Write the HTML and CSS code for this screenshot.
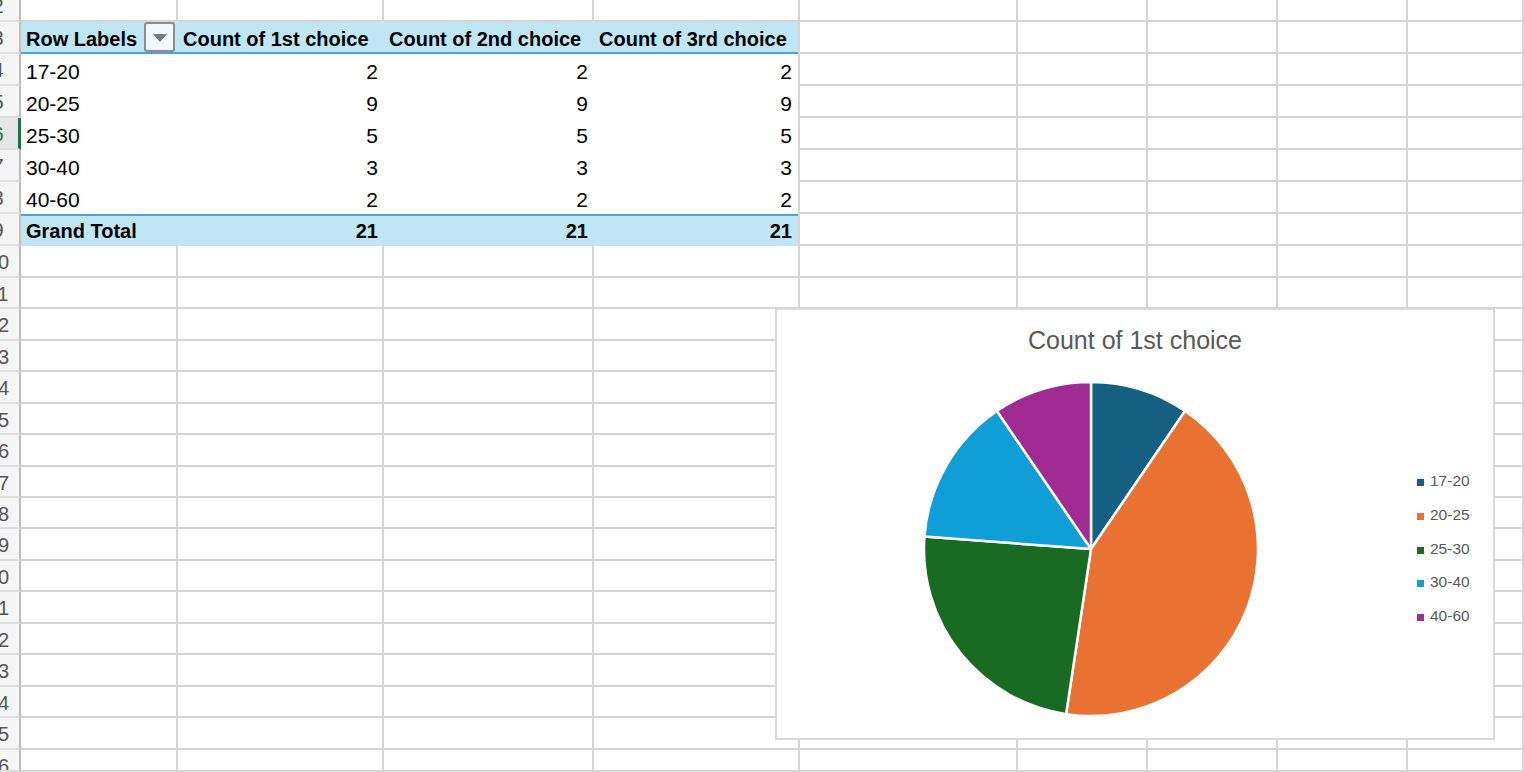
FILE: index.html
```html
<!DOCTYPE html>
<html lang="en">
<head>
    <meta charset="UTF-8">
    <meta name="viewport" content="width=device-width, initial-scale=1.0">
    <title>Age Groups - Pivot</title>
    <link rel="stylesheet" href="styles.css">
</head>
<body>
    <!-- Worksheet grid (rows 2-26, columns A-I) -->
    <div class="sheet" id="sheet">
        <!-- Pivot table on A3:D9 -->
        <div class="pivot">
            <div class="pv-row pv-head">
                <div class="pv-cell label">
                    <span>Row Labels</span>
                    <span class="filter-btn"><span class="arrow"></span></span>
                </div>
                <div class="pv-cell">Count of 1st choice</div>
                <div class="pv-cell">Count of 2nd choice</div>
                <div class="pv-cell">Count of 3rd choice</div>
            </div>
            <div class="pv-row">
                <div class="pv-cell">17-20</div>
                <div class="pv-cell num">2</div>
                <div class="pv-cell num">2</div>
                <div class="pv-cell num">2</div>
            </div>
            <div class="pv-row">
                <div class="pv-cell">20-25</div>
                <div class="pv-cell num">9</div>
                <div class="pv-cell num">9</div>
                <div class="pv-cell num">9</div>
            </div>
            <div class="pv-row">
                <div class="pv-cell">25-30</div>
                <div class="pv-cell num">5</div>
                <div class="pv-cell num">5</div>
                <div class="pv-cell num">5</div>
            </div>
            <div class="pv-row">
                <div class="pv-cell">30-40</div>
                <div class="pv-cell num">3</div>
                <div class="pv-cell num">3</div>
                <div class="pv-cell num">3</div>
            </div>
            <div class="pv-row">
                <div class="pv-cell">40-60</div>
                <div class="pv-cell num">2</div>
                <div class="pv-cell num">2</div>
                <div class="pv-cell num">2</div>
            </div>
            <div class="pv-row pv-total">
                <div class="pv-cell">Grand Total</div>
                <div class="pv-cell num">21</div>
                <div class="pv-cell num">21</div>
                <div class="pv-cell num">21</div>
            </div>
        </div>
    </div>

    <!-- Pie chart floating over the sheet -->
    <div class="chart">
        <div class="chart-title">Count of 1st choice</div>
        <div class="chart-body">
            <svg class="pie" width="340" height="340" viewBox="0 0 340 340">
                <path fill="#156082" d="M170 170 L170 3 A167 167 0 0 1 264.07 32.02 Z"/>
                <path fill="#E97132" d="M170 170 L264.07 32.02 A167 167 0 0 1 145.11 335.13 Z"/>
                <path fill="#196B24" d="M170 170 L145.11 335.13 A167 167 0 0 1 3.47 157.52 Z"/>
                <path fill="#0F9ED5" d="M170 170 L3.47 157.52 A167 167 0 0 1 75.93 32.02 Z"/>
                <path fill="#A02B93" d="M170 170 L75.93 32.02 A167 167 0 0 1 170 3 Z"/>
            </svg>
            <ul class="legend">
                <li><span class="sw" style="background:#156082"></span>17-20</li>
                <li><span class="sw" style="background:#E97132"></span>20-25</li>
                <li><span class="sw" style="background:#196B24"></span>25-30</li>
                <li><span class="sw" style="background:#0F9ED5"></span>30-40</li>
                <li><span class="sw" style="background:#A02B93"></span>40-60</li>
            </ul>
        </div>
    </div>

    <script>
        // Fill the rest of the grid: row numbers + empty cells.
        // Cells under the pivot (A3:D9) are skipped, the pivot is placed there.
        const sheet = document.getElementById('sheet');
        for (let r = 2; r <= 26; r++) {
            const rh = document.createElement('div');
            rh.className = 'rh';
            if (r === 2) rh.classList.add('top');
            if (r === 6) rh.classList.add('active');
            rh.innerHTML = '<span>' + r + '</span>';
            sheet.appendChild(rh);

            for (let c = 1; c <= 9; c++) {
                if (r >= 3 && r <= 9 && c <= 4) continue;
                const cell = document.createElement('div');
                cell.className = 'cell';
                sheet.appendChild(cell);
            }
        }
    </script>
</body>
</html>
```

FILE: styles.css
```css
/* Reset */
* {
    margin: 0;
    padding: 0;
    box-sizing: border-box;
}

body {
    font-family: 'Liberation Sans', Arial, sans-serif;
    background-color: #FFFFFF;
    color: #000000;
    width: 1524px;
    height: 772px;
    overflow: hidden;
    position: relative;
}

/* Worksheet grid */
.sheet {
    display: grid;
    grid-template-columns: 21px 157px 206px 210px 206px 218px 130px 130px 130px 1fr;
    grid-template-rows:
        22px repeat(8, 32px)
        31px 32px 31px 32px 31px 32px 31px 31px
        32px 31px 32px 31px 32px 31px 32px 22px;
    height: 772px;
}

.cell {
    border-right: 2px solid #D5D5D5;
    border-bottom: 2px solid #D5D5D5;
}

/* Row numbers (column is scrolled, so only part of the digits shows) */
.rh {
    background-color: #F5F5F5;
    border-right: 2px solid #BDBDBD;
    border-bottom: 2px solid #DDDDDD;
    color: #555555;
    font-size: 20px;
    overflow: hidden;
}

.rh span {
    display: block;
    width: 44px;
    margin-left: -24px;
    text-align: center;
    padding-top: 3px;
    line-height: 26px;
    white-space: nowrap;
}

.rh.top span {
    margin-top: -10px;
}

.rh.active {
    background-color: #E6E6E6;
    border-right: 3px solid #1E7145;
    color: #1E7145;
}

/* Pivot table */
.pivot {
    grid-column: 2 / 6;
    grid-row: 2 / 9;
    display: grid;
    grid-template-rows: repeat(7, 32px);
    border-right: 2px solid #D5D5D5;
    background-color: #FFFFFF;
}

.pv-row {
    display: grid;
    grid-template-columns: 157px 206px 210px 1fr;
    font-size: 21px;
}

.pv-cell {
    padding: 3px 6px 0 5px;
    line-height: 29px;
    white-space: nowrap;
}

.pv-cell.num {
    text-align: right;
}

.pv-head {
    background-color: #C0E6F5;
    border-bottom: 2px solid #44A6DC;
    font-size: 20px;
    font-weight: bold;
}

.pv-head .pv-cell {
    padding-top: 4px;
    line-height: 26px;
}

.pv-head .pv-cell.label {
    display: flex;
    justify-content: space-between;
    align-items: flex-start;
    padding: 0 3px 0 5px;
}

.pv-head .label > span:first-child {
    padding-top: 4px;
    line-height: 26px;
}

.filter-btn {
    width: 31px;
    height: 30px;
    border: 2px solid #8D8D8D;
    border-radius: 3px;
    background-color: #F2F8FB;
    display: flex;
    align-items: center;
    justify-content: center;
}

.arrow {
    width: 0;
    height: 0;
    border-left: 7px solid transparent;
    border-right: 7px solid transparent;
    border-top: 8px solid #7A7A7A;
    margin-top: 1px;
}

.pv-total {
    background-color: #C0E6F5;
    border-top: 2px solid #44A6DC;
    font-size: 20px;
    font-weight: bold;
}

.pv-total .pv-cell {
    padding-top: 1px;
}

/* Chart object */
.chart {
    position: absolute;
    left: 775px;
    top: 308px;
    width: 720px;
    height: 432px;
    border: 2px solid #D9D9D9;
    background-color: #FFFFFF;
}

.chart-title {
    margin-top: 15px;
    text-align: center;
    font-size: 25px;
    line-height: 30px;
    color: #595959;
}

.chart-body {
    display: flex;
    align-items: center;
    margin-top: 24px;
}

.pie {
    display: block;
    margin-left: 144px;
}

.pie path {
    stroke: #FFFFFF;
    stroke-width: 2.5;
    stroke-linejoin: round;
}

.legend {
    list-style: none;
    margin-left: 156px;
    margin-top: -1px;
}

.legend li {
    display: flex;
    align-items: center;
    height: 33.7px;
    font-size: 15.5px;
    color: #595959;
}

.legend .sw {
    width: 7px;
    height: 7px;
    margin-right: 6px;
    margin-top: 3px;
}
```
